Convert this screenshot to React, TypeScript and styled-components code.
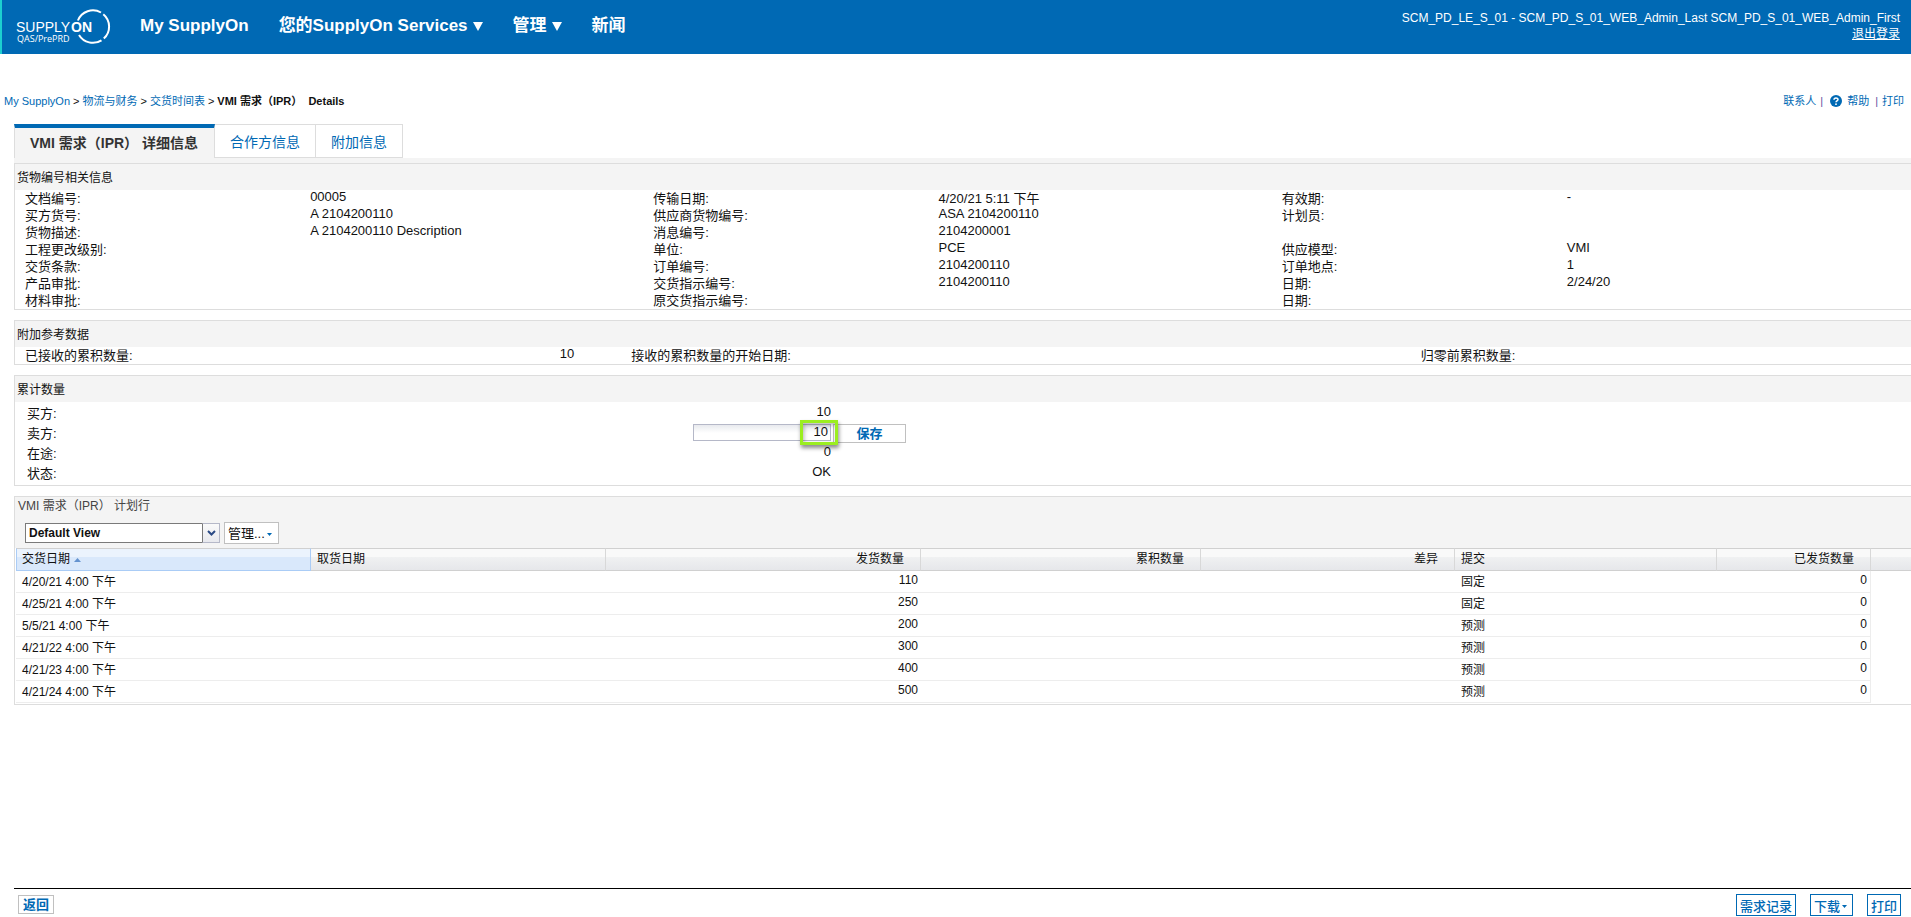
import React from "react";
import styled, { createGlobalStyle } from "styled-components";

const blue = "#0069b4";
const line = "#dddddd";
const shade = "#f4f4f4";

const GlobalStyle = createGlobalStyle`
  * { box-sizing: border-box; }
  body {
    margin: 0;
    background: #ffffff;
    color: #111111;
    font-family: "Liberation Sans", "Noto Sans CJK SC", sans-serif;
    font-size: 13px;
    line-height: 17px;
  }
  button, input, select { font-family: inherit; margin: 0; border-radius: 0; }
`;

const Page = styled.div`
  min-height: 100vh;
  display: flex;
  flex-direction: column;
`;

const Header = styled.header`
  display: flex;
  height: 54px;
  padding-right: 11px;
  background: ${blue};
  border-left: 2px solid #1ccfd0;
  color: #ffffff;
`;

const Logo = styled.svg`
  flex: none;
  display: block;
  width: 128px;
  height: 54px;
`;

const Nav = styled.nav`
  display: flex;
  gap: 30px;
  padding: 14px 10px;
  flex: 1;
`;

const NavLink = styled.a`
  display: flex;
  align-items: center;
  gap: 5px;
  height: 24px;
  color: #ffffff;
  font-size: 17px;
  font-weight: bold;
  line-height: 24px;
  text-decoration: none;
  white-space: nowrap;
`;

const Account = styled.div`
  padding-top: 10px;
  font-size: 12px;
  line-height: 16px;
  text-align: right;
  white-space: nowrap;
`;

const Logout = styled.a`
  color: #ffffff;
  text-decoration: underline;
`;

const TopBar = styled.div`
  display: flex;
  justify-content: space-between;
  padding: 39px 7px 15px 4px;
  font-size: 11px;
  line-height: 16px;
`;

const Crumbs = styled.nav`
  display: flex;
  gap: 3px;
  white-space: pre;
`;

const SmallLink = styled.a`
  color: ${blue};
  text-decoration: none;
`;

const Tools = styled.div`
  display: flex;
  align-items: center;
  gap: 4px;
  color: #5b4fa0;
`;

const Divider = styled.span`
  margin-left: 2px;
`;

const HelpIcon = styled.svg`
  display: block;
  width: 12px;
  height: 12px;
  margin: 0 1px 0 3px;
`;

const Tabs = styled.div`
  display: flex;
  height: 34px;
  margin-left: 14px;
`;

const Tab = styled.button<{ $active?: boolean }>`
  height: 34px;
  padding: ${(p) => (p.$active ? "0 16px 0 15px" : "2px 15px 0")};
  border: 1px solid ${line};
  border-left-width: ${(p) => (p.$active ? 1 : 0)}px;
  border-top: ${(p) => (p.$active ? `4px solid ${blue}` : `1px solid ${line}`)};
  border-bottom-width: ${(p) => (p.$active ? 0 : 1)}px;
  background: ${(p) => (p.$active ? shade : "#ffffff")};
  color: ${(p) => (p.$active ? "#333333" : blue)};
  font-size: 14px;
  font-weight: ${(p) => (p.$active ? "bold" : "normal")};
  line-height: 20px;
  white-space: pre;
`;

const Body = styled.main`
  flex: 1;
  display: flex;
  flex-direction: column;
  gap: 10px;
  margin-left: 14px;
  padding-top: 5px;
  background: linear-gradient(${shade} 5px, transparent 5px);
`;

const Panel = styled.section`
  border: 1px solid ${line};
  border-right: 0;
`;

const PanelTitle = styled.h2`
  margin: 0;
  padding: 6px 2px 3px;
  background: ${shade};
  font-size: 12px;
  font-weight: normal;
  line-height: 17px;
`;

const Facts = styled.dl`
  display: grid;
  grid-template-columns: repeat(3, 285fr 343fr);
  grid-auto-rows: 17px;
  margin: 0;
  padding: 0 1px 0 10px;
`;

const Label = styled.dt`
  line-height: 18px;
  white-space: nowrap;
`;

const Value = styled.dd<{ $mixed?: boolean }>`
  margin: 0;
  line-height: ${(p) => (p.$mixed ? 18 : 14)}px;
  white-space: nowrap;
`;

const Reference = styled.dl`
  display: grid;
  grid-template-columns: 549fr 57fr 789fr 490fr;
  height: 17px;
  margin: 0;
  padding-left: 10px;
`;

const ReferencePair = styled.div`
  display: flex;
  justify-content: space-between;
`;

const Totals = styled.div`
  padding: 3px 0 0 12px;
`;

const TotalRow = styled.div`
  display: grid;
  grid-template-columns: 804fr 1080fr;
  height: 20px;
  line-height: 17px;
`;

const TotalMain = styled.div`
  display: flex;
  justify-content: space-between;
`;

const TotalLabel = styled.label`
  line-height: 17px;
`;

const TotalValue = styled.output`
  line-height: 13px;
`;

const Field = styled.div`
  position: relative;
  height: 18px;
  margin-top: -1px;
`;

const AmountInput = styled.input`
  display: block;
  width: 138px;
  height: 17px;
  padding: 0 2px 2px;
  border: 1px solid #b5b8c8;
  background: linear-gradient(#e8eaee, #ffffff 8px);
  color: #111111;
  font-size: 13px;
  text-align: right;
`;

const Marker = styled.span`
  position: absolute;
  top: -4px;
  right: -7px;
  width: 38px;
  height: 25px;
  border: 3px solid #9bee20;
  box-shadow: 1px 3px 4px rgba(0, 0, 0, 0.45), inset 1px 2px 4px rgba(0, 0, 0, 0.3);
  pointer-events: none;
`;

const SaveButton = styled.button`
  display: block;
  width: 73px;
  height: 19px;
  margin: -1px 0 0 2px;
  padding: 1px 0 0;
  border: 1px solid #c0c0c0;
  background: #ffffff;
  color: ${blue};
  font-size: 13px;
  font-weight: bold;
  line-height: 16px;
`;

const PlanHead = styled.div`
  height: 51px;
  padding: 1px 0 0 3px;
  background: ${shade};
`;

const PlanTitle = styled.h2`
  margin: 0;
  color: #444444;
  font-size: 12px;
  font-weight: normal;
  line-height: 17px;
  white-space: pre;
`;

const Toolbar = styled.div`
  display: flex;
  align-items: center;
  gap: 4px;
  padding: 7px 0 0 7px;
`;

const ViewPicker = styled.div`
  position: relative;
  width: 195px;
  height: 20px;
`;

const ViewSelect = styled.select`
  appearance: none;
  display: block;
  width: 100%;
  height: 20px;
  padding: 0 20px 0 3px;
  border: 1px solid #7a7a7a;
  background: #ffffff;
  color: #111111;
  font-size: 12px;
  font-weight: bold;
`;

const Trigger = styled.span`
  position: absolute;
  top: 0;
  right: 0;
  display: flex;
  align-items: center;
  justify-content: center;
  width: 18px;
  height: 20px;
  border: 1px solid #b5b8c8;
  border-left-color: #7a7a7a;
  background: linear-gradient(#fafafa, #e8e9ee);
  pointer-events: none;
`;

const ManageButton = styled.button`
  display: flex;
  align-items: center;
  gap: 2px;
  width: 55px;
  height: 22px;
  padding: 2px 3px 0;
  border: 1px solid #c0c0c0;
  background: #ffffff;
  color: #111111;
  font-size: 13px;
  line-height: 18px;
`;

const Grid = styled.table`
  width: 100%;
  table-layout: fixed;
  border-collapse: separate;
  border-spacing: 0;
  margin-bottom: 1px;
  padding-left: 1px;
  font-size: 12px;
`;

const HeadCell = styled.th<{ $end?: boolean; $sorted?: boolean }>`
  height: 23px;
  padding: ${(p) => (p.$end ? "0 16px 1px 6px" : "0 6px 1px")};
  padding-left: ${(p) => (p.$sorted ? 5 : 6)}px;
  border-top: 1px solid #d0d0d0;
  border-bottom: 1px solid ${(p) => (p.$sorted ? "#aaccf6" : "#d0d0d0")};
  border-right: 1px solid ${(p) => (p.$sorted ? "#aaccf6" : "#d8d8d8")};
  border-left: ${(p) => (p.$sorted ? "1px solid #aaccf6" : "0")};
  background: ${(p) =>
    p.$sorted
      ? "linear-gradient(#ebf3fd 0 8px, #d9e8fb 8px)"
      : "linear-gradient(#f9f9f9 0 8px, #f0f1f2 8px, #e6e7ea)"};
  font-weight: normal;
  line-height: 18px;
  text-align: ${(p) => (p.$end ? "right" : "left")};
  &:last-child { border-right: 0; }
`;

const SortIcon = styled.svg`
  width: 7px;
  height: 4px;
  margin-left: 4px;
  vertical-align: 1px;
`;

const Cell = styled.td<{ $end?: boolean; $last?: boolean }>`
  height: 22px;
  padding: ${(p) => (p.$end ? "0 3px 2px" : "1px 6px 0")};
  border-bottom: 1px solid #ededed;
  border-right: ${(p) => (p.$last ? "1px solid #ededed" : "0")};
  line-height: 17px;
  text-align: ${(p) => (p.$end ? "right" : "left")};
`;

const Footer = styled.footer`
  display: flex;
  justify-content: space-between;
  align-items: flex-start;
  height: 29px;
  margin-left: 14px;
  padding: 5px 10px 0 4px;
  border-top: 1px solid #000000;
`;

const Actions = styled.div`
  display: flex;
  gap: 14px;
`;

const ActionButton = styled.button<{ $quiet?: boolean }>`
  display: flex;
  align-items: center;
  gap: 2px;
  height: ${(p) => (p.$quiet ? 19 : 22)}px;
  margin-top: ${(p) => (p.$quiet ? 1 : 0)}px;
  padding: ${(p) => (p.$quiet ? "0 4px" : "2px 3px 0")};
  border: 1px solid ${(p) => (p.$quiet ? "#c0c0c0" : blue)};
  background: #ffffff;
  color: ${blue};
  font-size: 13px;
  font-weight: ${(p) => (p.$quiet ? "bold" : 500)};
  line-height: 17px;
`;

const Caret = () => (
  <svg width="7" height="3" viewBox="0 0 7 3" aria-hidden="true">
    <path d="M0 0h5L2.5 3z" fill={blue} />
  </svg>
);

const NavCaret = () => (
  <svg width="10" height="9" viewBox="0 0 10 9" aria-hidden="true">
    <path d="M0 0h10L5 9z" fill="#fff" />
  </svg>
);

type Fact = [label: string, value?: string];

const facts: Fact[] = [
  ["文档编号:", "00005"], ["传输日期:", "4/20/21 5:11 下午"], ["有效期:", "-"],
  ["买方货号:", "A 2104200110"], ["供应商货物编号:", "ASA 2104200110"], ["计划员:"],
  ["货物描述:", "A 2104200110 Description"], ["消息编号:", "2104200001"], [""],
  ["工程更改级别:"], ["单位:", "PCE"], ["供应模型:", "VMI"],
  ["交货条款:"], ["订单编号:", "2104200110"], ["订单地点:", "1"],
  ["产品审批:"], ["交货指示编号:", "2104200110"], ["日期:", "2/24/20"],
  ["材料审批:"], ["原交货指示编号:"], ["日期:"],
];

const schedule = [
  ["4/20/21 4:00 下午", "110", "固定"],
  ["4/25/21 4:00 下午", "250", "固定"],
  ["5/5/21 4:00 下午", "200", "预测"],
  ["4/21/22 4:00 下午", "300", "预测"],
  ["4/21/23 4:00 下午", "400", "预测"],
  ["4/21/24 4:00 下午", "500", "预测"],
];

const columns = [295, 295, 315, 280, 254, 262, 154, 40];
const columnTotal = columns.reduce((sum, width) => sum + width, 0);

export default function App() {
  return (
    <Page>
      <GlobalStyle />
      <Header>
        <Logo viewBox="2 0 128 54" role="img" aria-label="SupplyOn QAS/PrePRD">
          <g fill="none" stroke="#fff" strokeWidth="2">
            <path d="M77.900 20.500A16.200 16.200 0 0 1 101 12.500" />
            <path d="M103.300 14.200A16.200 16.200 0 0 1 103.800 38.600" />
            <path d="M101.500 40.300A16.200 16.200 0 0 1 79 35" />
          </g>
          <text x="16" y="32" fill="#fff" fontFamily="Liberation Sans, sans-serif" fontSize="14">SUPPLY</text>
          <text x="71" y="32" fill="#fff" fontFamily="Liberation Sans, sans-serif" fontSize="14" fontWeight="700">ON</text>
          <text x="17" y="42" fill="#fff" fontFamily="Open Sans, sans-serif" fontSize="9">QAS/PrePRD</text>
        </Logo>
        <Nav>
          <NavLink href="#home">My SupplyOn</NavLink>
          <NavLink href="#services">您的SupplyOn Services<NavCaret /></NavLink>
          <NavLink href="#admin">管理<NavCaret /></NavLink>
          <NavLink href="#news">新闻</NavLink>
        </Nav>
        <Account>
          <div>SCM_PD_LE_S_01 - SCM_PD_S_01_WEB_Admin_Last SCM_PD_S_01_WEB_Admin_First</div>
          <Logout href="#logout">退出登录</Logout>
        </Account>
      </Header>

      <TopBar>
        <Crumbs>
          <SmallLink href="#home">My SupplyOn</SmallLink>&gt;
          <SmallLink href="#logistics">物流与财务</SmallLink>&gt;
          <SmallLink href="#schedules">交货时间表</SmallLink>&gt;
          <b>{"VMI 需求（IPR）  Details"}</b>
        </Crumbs>
        <Tools>
          <SmallLink href="#contact">联系人</SmallLink>|
          <HelpIcon viewBox="0 0 12 12" aria-hidden="true">
            <circle cx="6" cy="6" r="6" fill={blue} />
            <path d="M4 4.7C4 2.3 8 2.3 8 4.6 8 6 6 5.900 6 7.300" fill="none" stroke="#fff" strokeWidth="1.500" />
            <circle cx="6" cy="9.200" r=".9" fill="#fff" />
          </HelpIcon>
          <SmallLink href="#help">帮助</SmallLink>
          <Divider>|</Divider>
          <SmallLink href="#print">打印</SmallLink>
        </Tools>
      </TopBar>

      <Tabs role="tablist">
        <Tab role="tab" aria-selected="true" $active>{"VMI 需求（IPR） 详细信息"}</Tab>
        <Tab role="tab" aria-selected="false">合作方信息</Tab>
        <Tab role="tab" aria-selected="false">附加信息</Tab>
      </Tabs>

      <Body>
        <Panel>
          <PanelTitle>货物编号相关信息</PanelTitle>
          <Facts>
            {facts.map(([label, value = ""], i) => (
              <React.Fragment key={i}>
                <Label>{label}</Label>
                <Value $mixed={value.includes("午")}>{value}</Value>
              </React.Fragment>
            ))}
          </Facts>
        </Panel>

        <Panel>
          <PanelTitle>附加参考数据</PanelTitle>
          <Reference>
            <ReferencePair><Label>已接收的累积数量:</Label><Value>10</Value></ReferencePair>
            <span />
            <ReferencePair><Label>接收的累积数量的开始日期:</Label></ReferencePair>
            <ReferencePair><Label>归零前累积数量:</Label></ReferencePair>
          </Reference>
        </Panel>

        <Panel>
          <PanelTitle>累计数量</PanelTitle>
          <Totals>
            <TotalRow>
              <TotalMain><TotalLabel htmlFor="buyer">买方:</TotalLabel><TotalValue id="buyer">10</TotalValue></TotalMain>
            </TotalRow>
            <TotalRow>
              <TotalMain>
                <TotalLabel htmlFor="seller">卖方:</TotalLabel>
                <Field><AmountInput id="seller" defaultValue="10" /><Marker /></Field>
              </TotalMain>
              <div><SaveButton>保存</SaveButton></div>
            </TotalRow>
            <TotalRow>
              <TotalMain><TotalLabel htmlFor="transit">在途:</TotalLabel><TotalValue id="transit">0</TotalValue></TotalMain>
            </TotalRow>
            <TotalRow>
              <TotalMain><TotalLabel htmlFor="status">状态:</TotalLabel><TotalValue id="status">OK</TotalValue></TotalMain>
            </TotalRow>
          </Totals>
        </Panel>

        <Panel>
          <PlanHead>
            <PlanTitle>{"VMI 需求（IPR） 计划行"}</PlanTitle>
            <Toolbar>
              <ViewPicker>
                <ViewSelect aria-label="视图"><option>Default View</option></ViewSelect>
                <Trigger>
                  <svg width="9" height="6" viewBox="0 0 9 6" aria-hidden="true">
                    <path d="M1 1l3.500 3.500L8 1" fill="none" stroke="#2b4a85" strokeWidth="2" />
                  </svg>
                </Trigger>
              </ViewPicker>
              <ManageButton>管理...<Caret /></ManageButton>
            </Toolbar>
          </PlanHead>
          <Grid>
            <colgroup>
              {columns.map((width, i) => (
                <col key={i} style={{ width: `${(width / columnTotal) * 100}%` }} />
              ))}
            </colgroup>
            <thead>
              <tr>
                <HeadCell $sorted aria-sort="ascending">
                  交货日期
                  <SortIcon viewBox="0 0 7 4" aria-hidden="true"><path d="M0 4L3.500 0 7 4z" fill="#6593cf" /></SortIcon>
                </HeadCell>
                <HeadCell>取货日期</HeadCell>
                <HeadCell $end>发货数量</HeadCell>
                <HeadCell $end>累积数量</HeadCell>
                <HeadCell $end>差异</HeadCell>
                <HeadCell>提交</HeadCell>
                <HeadCell $end>已发货数量</HeadCell>
                <HeadCell />
              </tr>
            </thead>
            <tbody>
              {schedule.map(([date, amount, commitment]) => (
                <tr key={date}>
                  <Cell>{date}</Cell>
                  <Cell />
                  <Cell $end>{amount}</Cell>
                  <Cell />
                  <Cell />
                  <Cell>{commitment}</Cell>
                  <Cell $end $last>0</Cell>
                </tr>
              ))}
            </tbody>
          </Grid>
        </Panel>
      </Body>

      <Footer>
        <ActionButton $quiet>返回</ActionButton>
        <Actions>
          <ActionButton>需求记录</ActionButton>
          <ActionButton>下载<Caret /></ActionButton>
          <ActionButton>打印</ActionButton>
        </Actions>
      </Footer>
    </Page>
  );
}
